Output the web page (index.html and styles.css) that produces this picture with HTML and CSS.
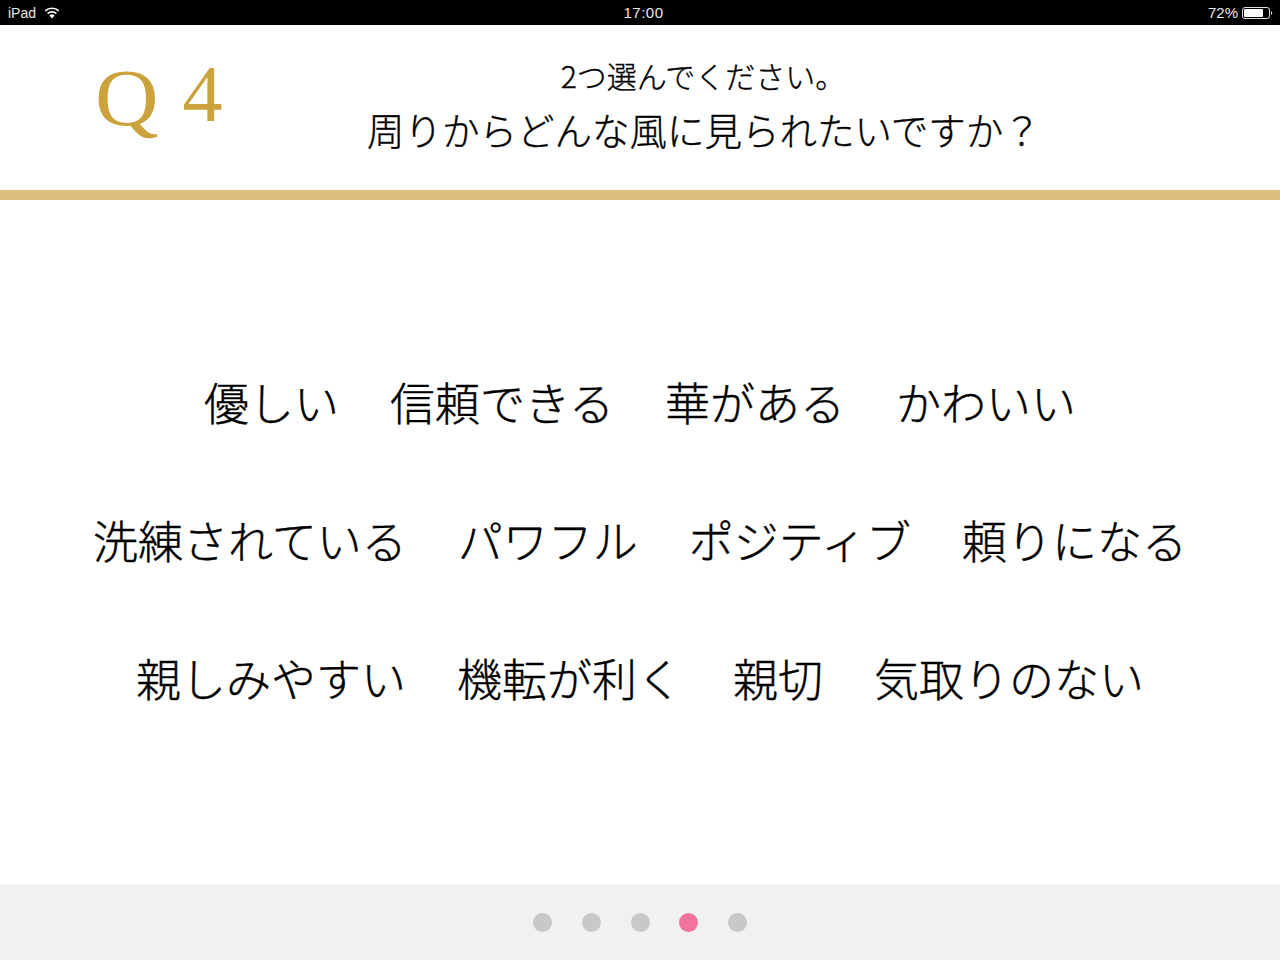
FILE: index.html
```html
<!DOCTYPE html>
<html lang="ja">
  <head>
    <meta charset="UTF-8" />
    <title>Q4</title>
    <link rel="stylesheet" href="styles.css">
  </head>
  <body>
    <!-- STATUS BAR -->
    <div class="status-bar">
      <div class="status-left">
        <span>iPad</span>
        <svg class="wifi" width="16" height="12" viewBox="0 0 16 12">
          <path d="M8 11.5 L5.4 8.4 A4 4 0 0 1 10.6 8.4 Z" fill="#fff"/>
          <path d="M3.6 6.6 A6.6 6.6 0 0 1 12.4 6.6" fill="none" stroke="#fff" stroke-width="1.6"/>
          <path d="M1.2 3.9 A10 10 0 0 1 14.8 3.9" fill="none" stroke="#fff" stroke-width="1.6"/>
        </svg>
      </div>
      <div class="status-time">17:00</div>
      <div class="status-right">
        <span>72%</span>
        <svg class="battery" width="31" height="12" viewBox="0 0 31 12">
          <rect x="0.5" y="0.5" width="27" height="11" rx="2.5" fill="none" stroke="#ddd"/>
          <rect x="2" y="2" width="19" height="8" rx="1" fill="#fff"/>
          <path d="M29 4 a2.2 2.2 0 0 1 0 4 Z" fill="#ddd"/>
        </svg>
      </div>
    </div>

    <!-- QUESTION HEADER -->
    <header class="question">
      <div class="question-no"><span class="q">Q</span><span class="n">4</span></div>
      <div class="question-text">
        <p class="hint">2つ選んでください。</p>
        <h1>周りからどんな風に見られたいですか？</h1>
      </div>
    </header>

    <!-- ANSWERS -->
    <main class="answers">
      <div class="answer-row">
        <span>優しい</span><span>信頼できる</span><span>華がある</span><span>かわいい</span>
      </div>
      <div class="answer-row">
        <span>洗練されている</span><span>パワフル</span><span>ポジティブ</span><span>頼りになる</span>
      </div>
      <div class="answer-row">
        <span>親しみやすい</span><span>機転が利く</span><span>親切</span><span>気取りのない</span>
      </div>
    </main>

    <!-- PAGE DOTS -->
    <footer class="pager">
      <i class="dot"></i>
      <i class="dot"></i>
      <i class="dot"></i>
      <i class="dot active"></i>
      <i class="dot"></i>
    </footer>
  </body>
</html>
```

FILE: styles.css
```css
* {
  box-sizing: border-box;
}

body {
  margin: 0;
  height: 960px;
  display: flex;
  flex-direction: column;
  background: #fff;
  color: #000;
  font-family: "Noto Sans CJK JP", "Noto Sans", sans-serif;
  font-weight: 300;
  overflow: hidden;
}

/* Status bar */
.status-bar {
  height: 25px;
  flex: none;
  background: #000;
  color: #e8e8e8;
  display: grid;
  grid-template-columns: 1fr auto 1fr;
  align-items: center;
  padding: 0 7px 0 8px;
  font-family: "Liberation Sans", sans-serif;
  font-size: 14px;
  font-weight: 400;
}

.status-left,
.status-right {
  display: flex;
  align-items: center;
}

.status-left {
  gap: 8px;
}

.status-right {
  justify-content: flex-end;
  gap: 4px;
}

.status-right span {
  font-size: 15px;
}

.status-time {
  font-size: 15px;
  letter-spacing: 0.5px;
  padding-left: 6px;
}

/* Header */
.question {
  height: 175px;
  flex: none;
  border-bottom: 10px solid #dfbf7f;
  display: grid;
  grid-template-columns: 272px 1fr;
  align-items: center;
  padding-left: 95px;
}

.question-no {
  color: #cba23c;
  font-family: "Liberation Serif", serif;
  display: flex;
  align-items: flex-start;
  gap: 24px;
}

.question-no .q {
  font-size: 88px;
  line-height: 1;
  margin-top: -11px;
  transform: scaleY(0.92);
  transform-origin: top;
}

.question-no .n {
  font-size: 80px;
  line-height: 1;
  margin-top: -15px;
}

.question-text {
  text-align: center;
  width: 666px;
  padding-bottom: 6px;
  -webkit-text-stroke: 0.35px #000;
}

.hint {
  margin: 0 0 8px;
  padding-left: 6px;
  font-size: 30px;
  line-height: 40px;
  transform: translateY(0);
}

.question-text h1 {
  margin: 0;
  font-size: 37.5px;
  line-height: 52px;
  font-weight: 300;
  white-space: nowrap;
}

/* Answers */
.answers {
  flex: 1;
  display: flex;
  flex-direction: column;
  align-items: center;
  gap: 72px;
  padding-top: 169px;
}

.answer-row {
  display: flex;
  justify-content: center;
  gap: 51px;
  font-size: 45px;
  line-height: 66px;
  white-space: nowrap;
  -webkit-text-stroke: 0.4px #000;
}

/* Pager */
.pager {
  height: 76px;
  flex: none;
  background: #f1f1f1;
  display: flex;
  justify-content: center;
  align-items: center;
  gap: 29.75px;
}

.dot {
  width: 19px;
  height: 19px;
  border-radius: 50%;
  background: #c8c8c8;
}

.dot.active {
  background: #f273a0;
}
```
